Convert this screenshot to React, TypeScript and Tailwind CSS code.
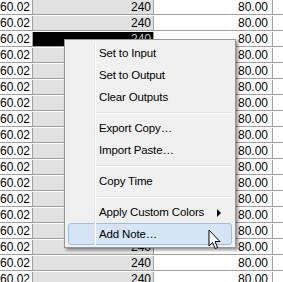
import { Fragment } from 'react';

type MenuEntry = { label: string; sub?: boolean; active?: boolean } | 'sep';

const rows = Array.from({ length: 18 }, (_, i) => ({ a: '60.02', b: '240', c: '80.00', selected: i === 2 }));

const menu: MenuEntry[] = [
  { label: 'Set to Input' },
  { label: 'Set to Output' },
  { label: 'Clear Outputs' },
  'sep',
  { label: 'Export Copy…' },
  { label: 'Import Paste…' },
  'sep',
  { label: 'Copy Time' },
  'sep',
  { label: 'Apply Custom Colors', sub: true },
  { label: 'Add Note…', active: true },
];

const GridRow = ({ a, b, c, selected }: { a: string; b: string; c: string; selected: boolean }) => (
  <div className="flex h-4 border-b border-[#a0a0a0] pt-px">
    <div className="w-[33px] shrink-0 overflow-hidden border-r border-[#a0a0a0] bg-white flex justify-end items-center pr-[2px]">
      <span className="whitespace-nowrap">{a}</span>
    </div>
    <div
      className={`w-[121px] shrink-0 border-r border-[#a0a0a0] flex justify-end items-center pr-[2px] ${
        selected ? 'bg-black text-[#c8c8c8]' : 'bg-[#e1e1e1]'
      }`}
    >
      {b}
    </div>
    <div className="w-[119px] shrink-0 border-r border-[#a0a0a0] bg-white flex justify-end items-center pr-[4px]">{c}</div>
    <div className="flex-1 bg-white" />
  </div>
);

const ContextMenu = () => (
  <div className="absolute left-[64px] top-[39px] w-[172px] border border-[#979797] bg-[#f0f0f0] px-[3px] py-[2px] text-[11.5px] tracking-[-0.15px] shadow-[2px_2px_3px_rgba(0,0,0,0.45)]">
    {/* icon gutter */}
    <div className="absolute left-[29px] top-[2px] bottom-[2px] w-px bg-[#e2e3e3] z-10" />
    <div className="absolute left-[30px] top-[2px] bottom-[2px] w-px bg-white z-10" />
    {menu.map((item, i) =>
      item === 'sep' ? (
        <div key={i} className="h-[9px] flex flex-col justify-center ml-[27px]">
          <div className="h-px bg-[#e0e0e0]" />
          <div className="h-px bg-white" />
        </div>
      ) : (
        <Fragment key={i}>
          <div
            className={`relative h-[22px] flex items-center pl-[30px] pt-[2px] rounded-[3px] border ${
              item.active ? 'bg-[#d6e5f5] border-[#99bfe8]' : 'border-transparent'
            }`}
          >
            <span>{item.label}</span>
            {item.sub && (
              <svg className="absolute left-[148px] top-[7px]" width="5" height="8" viewBox="0 0 5 8">
                <polygon points="0,0 4,4 0,8" fill="#000" />
              </svg>
            )}
          </div>
        </Fragment>
      )
    )}
  </div>
);

const Cursor = () => (
  <svg className="absolute left-[208px] top-[229px]" width="14" height="21" viewBox="0 0 14 21">
    <path
      d="M1 1 L1 17 L4.5 13.5 L7.2 19.5 L9.6 18.5 L7 12.6 L12 12.6 Z"
      fill="#fff"
      stroke="#000"
      strokeWidth="1"
      strokeLinejoin="miter"
    />
  </svg>
);

export default function App() {
  return (
    <div className="relative w-[283px] h-[282px] overflow-hidden bg-white text-[12px] text-black font-['Liberation_Sans',Arial,sans-serif] leading-none">
      <div className="-mt-px">
        {rows.map((r, i) => (
          <GridRow key={i} {...r} />
        ))}
      </div>
      <ContextMenu />
      <Cursor />
    </div>
  );
}
